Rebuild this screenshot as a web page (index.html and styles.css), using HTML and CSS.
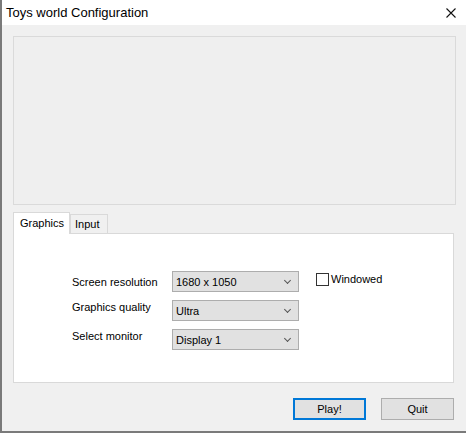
FILE: index.html
```html
<!DOCTYPE html>
<html lang="en">
<head>
    <meta charset="UTF-8">
    <title>Toys world Configuration</title>
    <link rel="stylesheet" href="styles.css">
</head>
<body>
    <div class="window">
        <div class="titlebar">
            <span class="title">Toys world Configuration</span>
            <svg class="close" width="10" height="10" viewBox="0 0 10 10">
                <path d="M0.5 0.5 L9.5 9.5 M9.5 0.5 L0.5 9.5" stroke="#111" stroke-width="1.1" fill="none"/>
            </svg>
        </div>

        <div class="content">
            <div class="banner"></div>

            <div class="tabs">
                <div class="tab active">Graphics</div>
                <div class="tab">Input</div>
            </div>

            <div class="tab-panel">
                <div class="settings">
                    <label class="label first">Screen resolution</label>
                    <div class="combo"><span>1680 x 1050</span><i class="chev"></i></div>
                    <div class="check">
                        <span class="box"></span>
                        <span>Windowed</span>
                    </div>

                    <label class="label">Graphics quality</label>
                    <div class="combo"><span>Ultra</span><i class="chev"></i></div>
                    <div></div>

                    <label class="label">Select monitor</label>
                    <div class="combo"><span>Display 1</span><i class="chev"></i></div>
                    <div></div>
                </div>
            </div>

            <div class="buttons">
                <button class="btn default">Play!</button>
                <button class="btn">Quit</button>
            </div>
        </div>
    </div>
</body>
</html>
```

FILE: styles.css
```css
body {
    margin: 0;
    background: #ffffff;
    font-family: "Liberation Sans", Arial, sans-serif;
    font-size: 11px;
    color: #000;
}

.window {
    width: 466px;
    height: 433px;
    box-sizing: border-box;
    background: #f0f0f0;
    border-left: 2px solid #7a7a7a;
    border-bottom: 2px solid #7a7a7a;
    overflow: hidden;
}

.titlebar {
    height: 25px;
    background: #ffffff;
    display: flex;
    align-items: center;
    justify-content: space-between;
    padding: 0 10px 0 4px;
}

.title {
    font-size: 13px;
    color: #000;
}

.close {
    display: block;
}

.content {
    padding: 11px 10px 0 11px;
}

.banner {
    height: 167px;
    border: 1px solid #dadada;
    background: #efefef;
}

.tabs {
    display: flex;
    align-items: flex-end;
    margin-top: 7px;
    height: 21px;
}

.tab {
    box-sizing: border-box;
    border: 1px solid #d9d9d9;
    border-bottom: none;
    background: #f0f0f0;
    height: 19px;
    line-height: 19px;
    padding: 0 4px;
    width: 38px;
}

.tab.active {
    background: #ffffff;
    height: 22px;
    line-height: 20px;
    width: 57px;
    padding: 0 6px;
    position: relative;
    z-index: 1;
    margin-bottom: -1px;
}

.tab-panel {
    width: 441px;
    height: 150px;
    box-sizing: border-box;
    background: #ffffff;
    border: 1px solid #d9d9d9;
    padding: 37px 0 0 58px;
}

.settings {
    display: grid;
    grid-template-columns: 100px 127px auto;
    column-gap: 0;
    row-gap: 8px;
}

.label {
    line-height: 14px;
    align-self: start;
}

.label.first {
    padding-top: 4px;
}

.combo {
    box-sizing: border-box;
    height: 21px;
    border: 1px solid #adadad;
    background: #e1e1e1;
    display: flex;
    align-items: center;
    justify-content: space-between;
    padding: 0 8px 0 3px;
}

.chev {
    width: 4px;
    height: 4px;
    border-right: 1px solid #555;
    border-bottom: 1px solid #555;
    transform: rotate(45deg);
    margin-top: -3px;
}

.check {
    display: flex;
    align-items: center;
    gap: 2px;
    margin-left: 17px;
    height: 14px;
    margin-top: 1px;
}

.box {
    width: 11px;
    height: 11px;
    border: 1px solid #333;
    background: #fff;
}

.buttons {
    display: flex;
    justify-content: flex-end;
    gap: 15px;
    width: 441px;
    margin-top: 15px;
}

.btn {
    box-sizing: border-box;
    width: 73px;
    height: 22px;
    border: 1px solid #adadad;
    background: #e1e1e1;
    font-family: "Liberation Sans", Arial, sans-serif;
    font-size: 11px;
    color: #000;
    padding: 0;
}

.btn.default {
    border: 2px solid #0078d7;
}
```
